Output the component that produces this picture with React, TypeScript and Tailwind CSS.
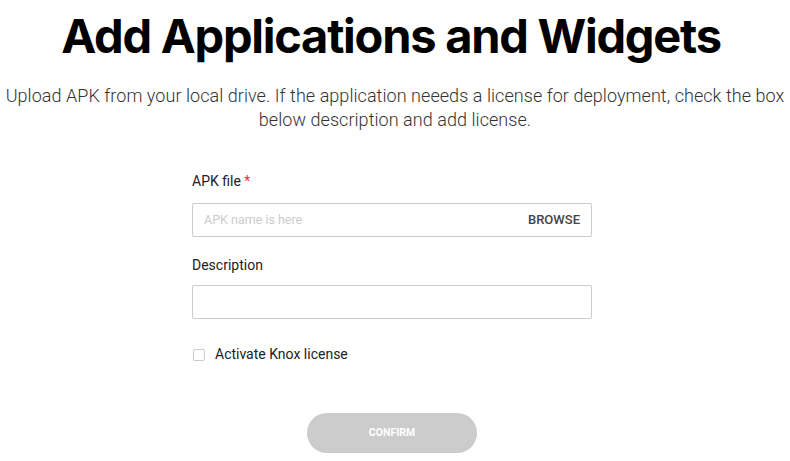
export default function App() {
  return (
    <div className="w-[790px] h-[461px] bg-white overflow-hidden flex flex-col items-center" style={{ fontFamily: 'Roboto, "Liberation Sans", sans-serif' }}>
      <h1 className="mt-[8px] mr-[8px] text-[47px] leading-[56px] font-bold text-black tracking-[-1.25px] font-['Inter',sans-serif]">
        Add Applications and Widgets
      </h1>
      <p className="mt-[20px] w-[790px] px-[2px] text-center text-[18px] leading-[24px] text-[#333] tracking-[0.05px] font-light">
        Upload APK from your local drive. If the application neeeds a license for deployment, check the box below description and add license.
      </p>
      <form className="mt-[40px] w-[400px] mr-[6px] flex flex-col">
        <label className="text-[14px] leading-[18px] text-[#222]">
          APK file <span className="text-red-500">*</span>
        </label>
        <div className="mt-[13px] h-[34px] border border-[#ccc] rounded-[2px] flex items-center justify-between px-[11px]">
          <span className="text-[12.5px] text-[#ccc]">APK name is here</span>
          <span className="text-[13px] font-medium text-[#444]">BROWSE</span>
        </div>
        <label className="mt-[19px] text-[14px] leading-[18px] text-[#222]">Description</label>
        <div className="mt-[11px] h-[34px] border border-[#ccc] rounded-[2px]" />
        <div className="mt-[25px] flex items-center">
          <span className="w-[12px] h-[12px] border border-[#ccc] rounded-[2px] ml-[1px]" />
          <span className="ml-[10px] text-[14px] text-[#222]">Activate Knox license</span>
        </div>
        <button type="button" className="mt-[48px] self-center w-[170px] h-[40px] rounded-full bg-[#ccc] text-white text-[10.5px] font-bold">
          CONFIRM
        </button>
      </form>
    </div>
  )
}
